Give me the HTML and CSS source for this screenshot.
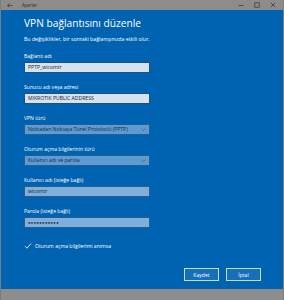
FILE: index.html
```html
<!DOCTYPE html>
<html lang="tr">
<head>
<meta charset="utf-8">
<link rel="stylesheet" href="styles.css">
</head>
<body>
<div class="window">
  <div class="titlebar">
    <div class="tb-left">
      <svg class="back" width="6" height="5" viewBox="0 0 6 5"><path d="M2.5 0.5 L0.5 2.5 L2.5 4.5 M0.5 2.5 H5.5" fill="none" stroke="#333" stroke-width="0.7"/></svg>
      <span class="apptitle">Ayarlar</span>
    </div>
    <div class="controls">
      <svg width="6" height="6" viewBox="0 0 6 6"><path d="M0.5 3.5 H5.5" stroke="#333" stroke-width="0.7"/></svg>
      <svg width="6" height="6" viewBox="0 0 6 6"><rect x="0.8" y="0.8" width="4.4" height="4.4" fill="none" stroke="#333" stroke-width="0.7"/></svg>
      <svg width="6" height="6" viewBox="0 0 6 6"><path d="M0.8 0.8 L5.2 5.2 M5.2 0.8 L0.8 5.2" stroke="#333" stroke-width="0.7"/></svg>
    </div>
  </div>
  <div class="content">
    <h1 class="title">VPN bağlantısını düzenle</h1>
    <p class="desc">Bu değişiklikler, bir sonraki bağlanışınızda etkili olur.</p>

    <div class="field">
      <div class="label">Bağlantı adı</div>
      <div class="input light">PPTP_wicomtr</div>
    </div>
    <div class="field">
      <div class="label">Sunucu adı veya adresi</div>
      <div class="input light">MIKROTIK PUBLIC ADDRESS</div>
    </div>
    <div class="field">
      <div class="label">VPN türü</div>
      <div class="input select">Noktadan Noktaya Tünel Protokolü (PPTP)<svg class="chev" width="5" height="3" viewBox="0 0 5 3"><path d="M0.5 0.5 L2.5 2.5 L4.5 0.5" fill="none" stroke="#3a5f85" stroke-width="0.7"/></svg></div>
    </div>
    <div class="field">
      <div class="label">Oturum açma bilgilerinin türü</div>
      <div class="input select">Kullanıcı adı ve parola<svg class="chev" width="5" height="3" viewBox="0 0 5 3"><path d="M0.5 0.5 L2.5 2.5 L4.5 0.5" fill="none" stroke="#3a5f85" stroke-width="0.7"/></svg></div>
    </div>
    <div class="field">
      <div class="label">Kullanıcı adı (isteğe bağlı)</div>
      <div class="input mid">wicomtr</div>
    </div>
    <div class="field">
      <div class="label">Parola (isteğe bağlı)</div>
      <div class="input mid pw">●●●●●●●●●●●</div>
    </div>

    <div class="check">
      <svg width="8" height="8" viewBox="0 0 8 8"><path d="M1 4.2 L3 6.2 L7 1.5" fill="none" stroke="#e8f2fb" stroke-width="0.9"/></svg>
      <span>Oturum açma bilgilerimi anımsa</span>
    </div>

    <div class="buttons">
      <div class="btn primary">Kaydet</div>
      <div class="btn">İptal</div>
    </div>
  </div>
  <div class="bottombar"></div>
</div>
</body>
</html>
```

FILE: styles.css
```css
* { box-sizing: border-box; }
html, body { margin: 0; padding: 0; }
body {
  width: 284px;
  height: 300px;
  overflow: hidden;
  font-family: "Open Sans", "Noto Sans", sans-serif;
  background: #0063b1;
}
.window {
  width: 284px;
  height: 300px;
  display: flex;
  flex-direction: column;
  border-left: 1px solid #7d7d7d;
  border-right: 1px solid #7d7d7d;
}
.titlebar {
  height: 10px;
  flex: 0 0 10px;
  background: #8c8c8c;
  display: flex;
  align-items: center;
  justify-content: space-between;
  padding: 0 7px 0 6px;
}
.tb-left { display: flex; align-items: center; gap: 9px; }
.back { display: block; }
.apptitle { font-size: 4.5px; color: #2a2a2a; line-height: 6px; }
.controls { display: flex; gap: 10px; align-items: center; }
.controls svg { display: block; }
.content {
  flex: 1;
  background: #0063b1;
  padding: 7px 0 0 23px;
  display: flex;
  flex-direction: column;
  color: #fff;
}
.title {
  margin: 0;
  font-size: 10.2px;
  font-weight: 400;
  line-height: 13px;
}
.desc {
  margin: 5px 0 0;
  font-size: 5.2px;
  line-height: 8px;
}
.field {
  display: flex;
  flex-direction: column;
  margin-top: 9px;
  width: 126px;
}
.field + .field { margin-top: 10px; }
.label {
  font-size: 5.1px;
  line-height: 8px;
  margin-bottom: 2px;
}
.input {
  height: 11px;
  border: 1px solid #1f4f80;
  font-size: 5.1px;
  line-height: 9px;
  padding: 0 3px;
  color: #1a1a1a;
  display: flex;
  align-items: center;
  justify-content: space-between;
  white-space: nowrap;
}
.light { background: #d3e3f2; }
.mid { background: #7fb0dd; border-color: #2b5c8c; }
.select { background: #5e9bd3; border-color: #2b5c8c; color: #0f2a45; }
.pw { font-size: 4px; letter-spacing: 0.4px; }
.chev { flex: none; }
.check {
  margin-top: 14px;
  display: flex;
  align-items: center;
  gap: 3px;
  font-size: 5.1px;
  line-height: 8px;
}
.check svg { display: block; }
.buttons {
  display: flex;
  justify-content: flex-end;
  gap: 7px;
  margin-top: 18px;
  padding-right: 22px;
}
.btn {
  width: 35px;
  height: 13px;
  border: 1px solid #c7dcef;
  background: #1570bb;
  color: #fff;
  font-size: 5.1px;
  display: flex;
  align-items: center;
  justify-content: center;
}
.bottombar {
  height: 11px;
  flex: 0 0 11px;
  background: #8d8d8d;
}
```
